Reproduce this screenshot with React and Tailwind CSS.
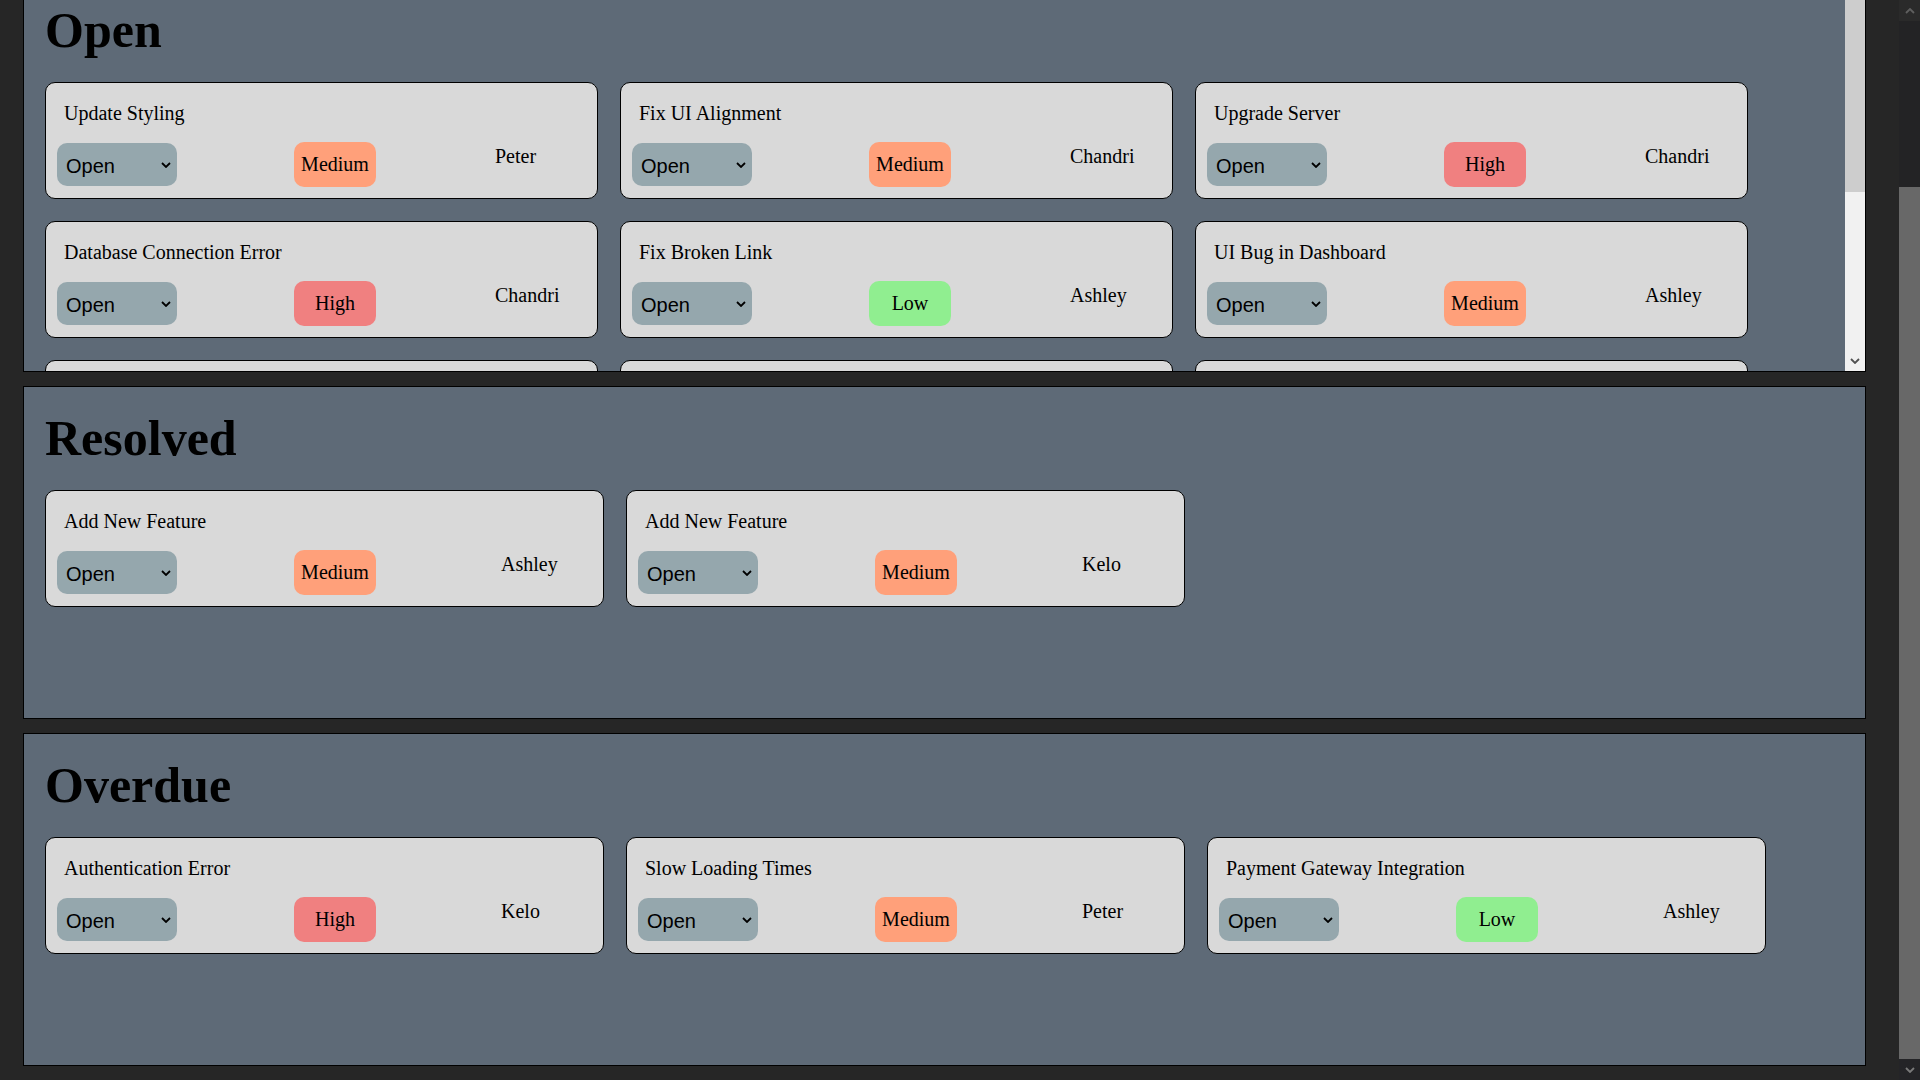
import { useLayoutEffect, useRef } from "react"

const priorityStyles = {
  High: "bg-[#f08080]",
  Medium: "bg-[#ffa07a]",
  Low: "bg-[#90ee90]",
}

const openTickets = [
  { title: "Update Styling", priority: "Medium", assignee: "Peter" },
  { title: "Fix UI Alignment", priority: "Medium", assignee: "Chandri" },
  { title: "Upgrade Server", priority: "High", assignee: "Chandri" },
  { title: "Database Connection Error", priority: "High", assignee: "Chandri" },
  { title: "Fix Broken Link", priority: "Low", assignee: "Ashley" },
  { title: "UI Bug in Dashboard", priority: "Medium", assignee: "Ashley" },
  { title: "Improve Search", priority: "Low", assignee: "Kelo" },
  { title: "Update Dependencies", priority: "Medium", assignee: "Peter" },
  { title: "Email Notifications", priority: "High", assignee: "Kelo" },
  { title: "Mobile Layout Fix", priority: "Medium", assignee: "Ashley" },
  { title: "Add Dark Mode", priority: "Low", assignee: "Chandri" },
]

const resolvedTickets = [
  { title: "Add New Feature", priority: "Medium", assignee: "Ashley" },
  { title: "Add New Feature", priority: "Medium", assignee: "Kelo" },
]

const overdueTickets = [
  { title: "Authentication Error", priority: "High", assignee: "Kelo" },
  { title: "Slow Loading Times", priority: "Medium", assignee: "Peter" },
  { title: "Payment Gateway Integration", priority: "Low", assignee: "Ashley" },
]

function Chevron({ up, className }) {
  return (
    <svg width="10" height="6" viewBox="0 0 10 6" className={className}>
      <polyline
        points={up ? "1,5 5,1 9,5" : "1,1 5,5 9,1"}
        fill="none"
        stroke="currentColor"
        strokeWidth="1.8"
      />
    </svg>
  )
}

function TicketCard({ ticket, width }) {
  return (
    <div
      className={`${width} rounded-[10px] border border-black bg-[#d9d9d9] p-[11px]`}
    >
      <p className="px-[7px] pt-[8px] text-[20px] leading-[23px]">
        {ticket.title}
      </p>
      <div className="mt-[17px] flex items-start">
        <div className="relative mt-[1px] h-[43px] w-[120px]">
          <select
            defaultValue="Open"
            className="h-full w-full appearance-none rounded-[10px] bg-[#95a7ad] pl-[9px] pt-[3px] font-['Liberation_Sans',Arial,sans-serif] text-[20px] text-black outline-none"
          >
            <option>Open</option>
            <option>Resolved</option>
            <option>Overdue</option>
          </select>
          <Chevron className="pointer-events-none absolute right-[6px] top-[19px] text-black" />
        </div>
        <span
          className={`ml-[117px] flex h-[45px] w-[82px] items-center justify-center rounded-[10px] text-[20px] leading-[23px] ${priorityStyles[ticket.priority]}`}
        >
          {ticket.priority}
        </span>
        <span className="ml-auto w-[91px] pt-[3px] text-[20px] leading-[23px]">
          {ticket.assignee}
        </span>
      </div>
    </div>
  )
}

function Heading({ children }) {
  return (
    <h2 className="mb-[24px] text-[50px] font-bold leading-[56px]">{children}</h2>
  )
}

function OpenColumn({ tickets }) {
  return (
    <section className="ml-[23px] mr-[33px] mb-[14px] flex h-[394px] border border-black bg-[#5e6a77]">
      <div className="flex-1 overflow-y-scroll pl-[21px] pt-[23px] pb-[60px] [scrollbar-width:none]">
        <Heading>Open</Heading>
        <div className="flex flex-wrap gap-[22px]">
          {tickets.map((ticket, i) => (
            <TicketCard key={i} ticket={ticket} width="w-[553px]" />
          ))}
        </div>
      </div>
      {/* light inner scrollbar */}
      <div className="flex w-[20px] shrink-0 flex-col bg-[#f1f1f1]">
        <div className="flex h-[20px] items-center justify-center text-[#505050]">
          <Chevron up />
        </div>
        <div className="h-[193px] bg-[#cdcdcd]" />
        <div className="flex-1" />
        <div className="flex h-[20px] items-center justify-center text-[#505050]">
          <Chevron />
        </div>
      </div>
    </section>
  )
}

function Column({ title, tickets }) {
  return (
    <section className="ml-[23px] mr-[33px] mb-[14px] h-[333px] border border-black bg-[#5e6a77] pl-[21px] pr-[21px] pt-[23px]">
      <Heading>{title}</Heading>
      <div className="flex flex-wrap gap-[22px]">
        {tickets.map((ticket, i) => (
          <TicketCard key={i} ticket={ticket} width="w-[559px]" />
        ))}
      </div>
    </section>
  )
}

export default function App() {
  const pageRef = useRef(null)

  // page is shown scrolled to the bottom
  useLayoutEffect(() => {
    const el = pageRef.current
    if (el) el.scrollTop = el.scrollHeight
  }, [])

  return (
    <div className="flex h-screen bg-[#262626] font-['Liberation_Serif','Times_New_Roman',serif] text-black">
      <div
        ref={pageRef}
        className="flex-1 overflow-y-scroll [scrollbar-width:none]"
      >
        <header className="flex h-[184px] flex-col justify-center px-[23px]">
          <h1 className="text-[40px] font-bold text-[#d9d9d9]">Ticket Tracker</h1>
        </header>
        <div className="pt-[14px]">
          <OpenColumn tickets={openTickets} />
          <Column title="Resolved" tickets={resolvedTickets} />
          <Column title="Overdue" tickets={overdueTickets} />
        </div>
      </div>
      {/* dark page scrollbar */}
      <div className="flex w-[21px] shrink-0 flex-col bg-[#232325]">
        <div className="flex h-[21px] items-center justify-center bg-[#2a2a2a] text-[#5f5f5f]">
          <Chevron up />
        </div>
        <div className="h-[166px]" />
        <div className="flex-1 bg-[#686868]" />
        <div className="flex h-[21px] items-center justify-center bg-[#242427] text-[#7a7a7a]">
          <Chevron />
        </div>
      </div>
    </div>
  )
}
